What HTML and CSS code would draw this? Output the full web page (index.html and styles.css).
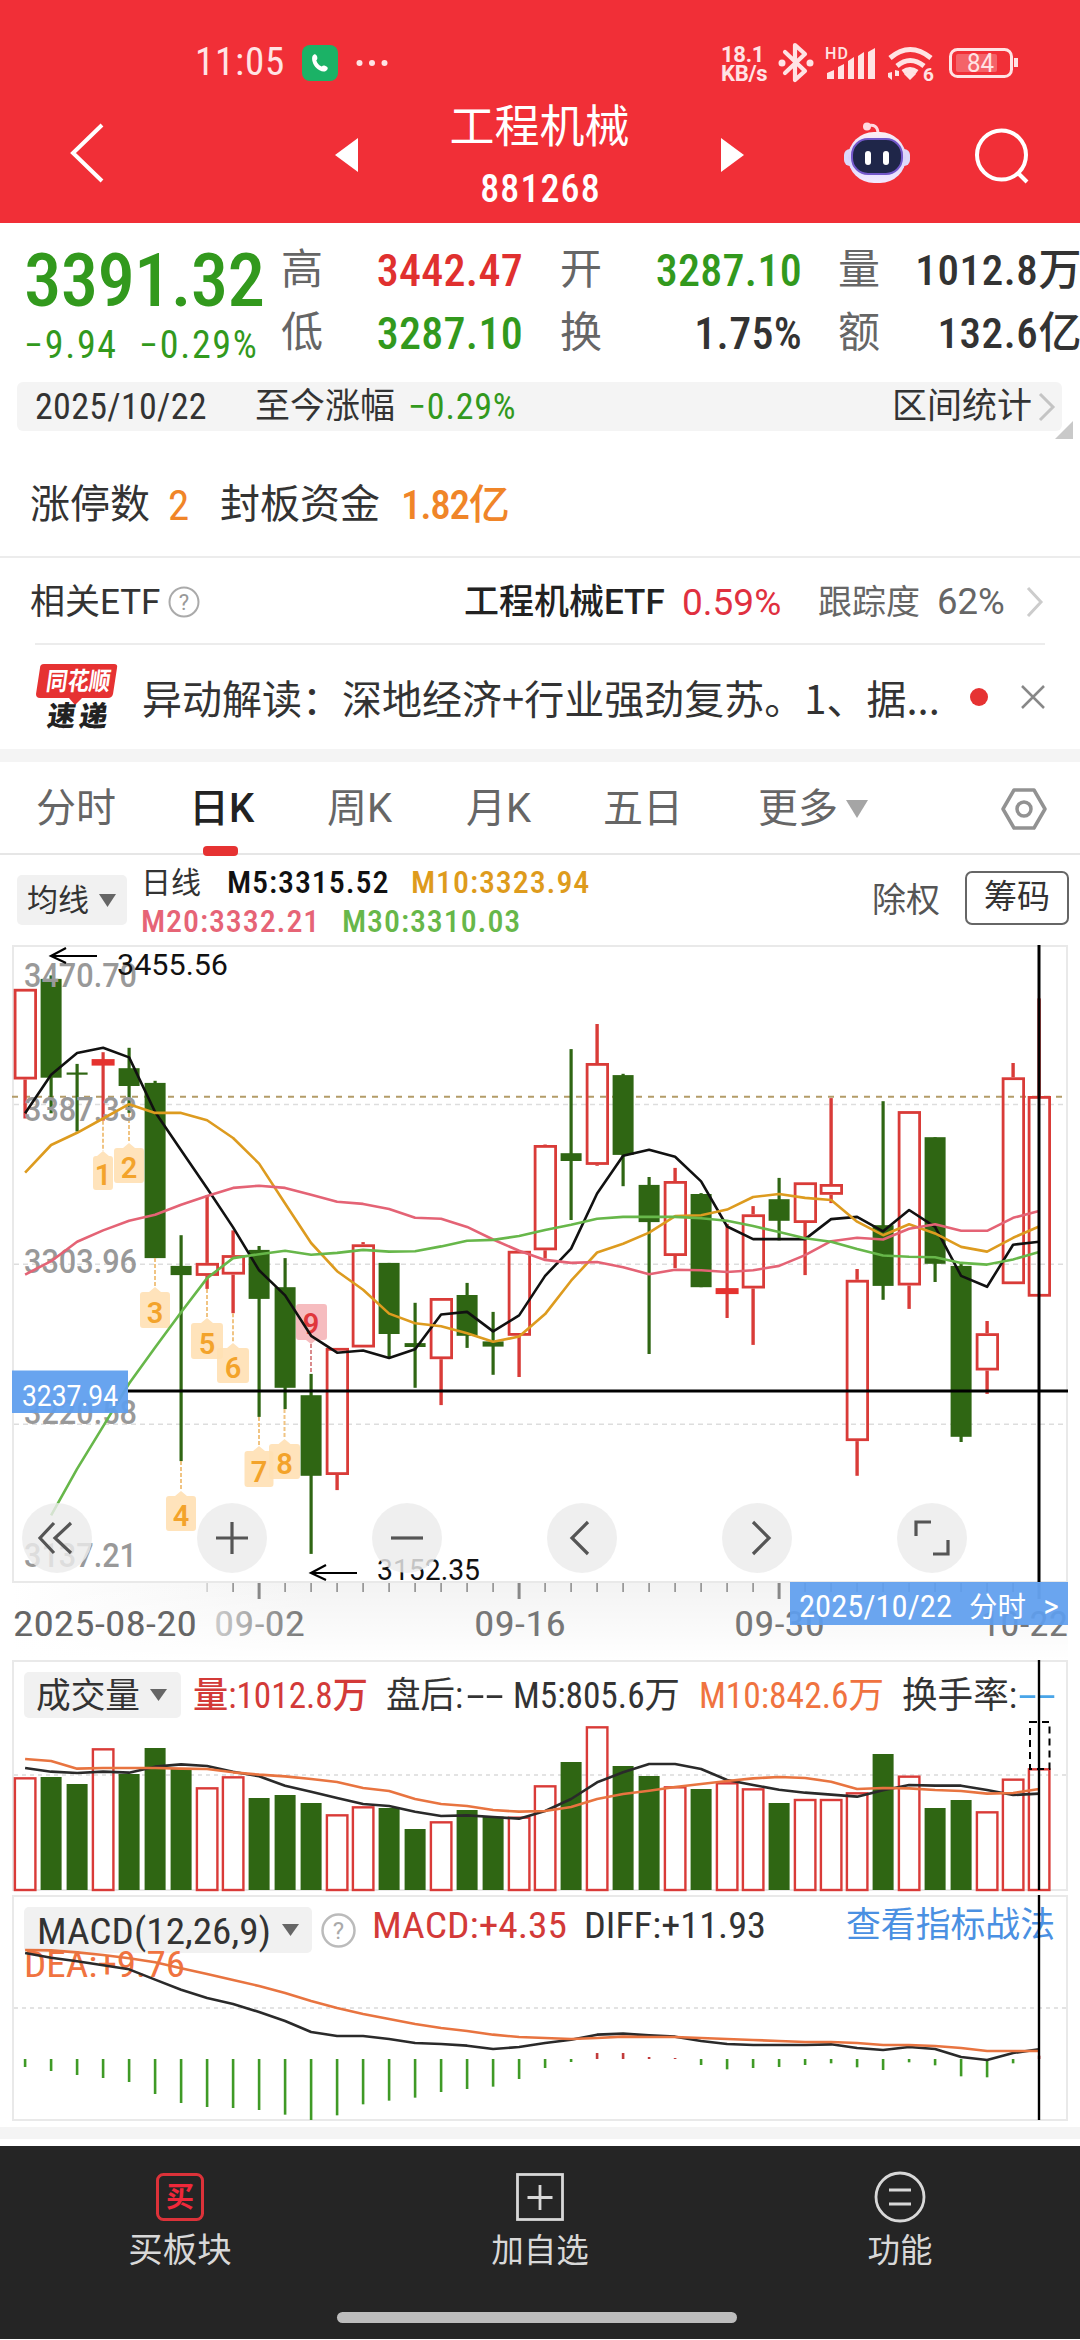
FILE: index.html
```html
<!DOCTYPE html>
<html lang="zh-CN">
<head>
<meta charset="utf-8">
<title>工程机械 881268</title>
<link rel="stylesheet" href="styles.css">
</head>
<body>
<header class="header">
  <div class="status">
    <span class="clock">11:05</span>
    <svg class="call" width="36" height="36" viewBox="0 0 36 36"><rect width="36" height="36" rx="8" fill="#1bb266"/><path d="M12 9.500c1-.8 2.600-.2 3.200 2.300.4 1.700.1 2.900-.9 3.500.7 3 2.600 5.200 5.500 6.200.8-.9 1.900-1.100 3.200-.7 2.400.8 3.300 2 2.500 3.400-1.400 2.600-4.500 3.100-8 1.100-4.600-2.600-7.200-6.900-7.400-11.500 0-2.200.6-3.500 1.900-4.300z" fill="#fff"/></svg>
    <svg class="dots" width="32" height="8" viewBox="0 0 32 8" fill="#ffe3e4"><circle cx="3.500" cy="4" r="3"/><circle cx="16" cy="4" r="3"/><circle cx="28.500" cy="4" r="3"/></svg>
    <span class="speed">18.1<br>KB/s</span>
    <svg class="sys" width="250" height="44" viewBox="774 40 250 44" fill="none" stroke="#ffe3e4">
      <path d="M785 51l20 19-10 9V44l10 9-20 19" stroke-width="4.200" stroke-linejoin="round" stroke-linecap="round"/>
      <g fill="#ffe3e4" stroke="none"><circle cx="782" cy="62" r="3.500"/><circle cx="810" cy="62" r="3.500"/>
      <path d="M827 78v-6l7-3v9zM838 78V66l6-3v15zM848 78V60l6-4v22zM858 78V55l6-4v27zM868 78V51l7-4v31z"/>
      <path d="M904 73l6-4 6 4-6 6zM888 72l4-1V79l-4-3zM895 69l4 1v5h-4z"/></g>
      <path d="M890 57q20-17 41 0M897 65q13-11 27 0M903 71q7-5 14 0" stroke-width="5"/>
      <rect x="950.500" y="48.500" width="61" height="27" rx="7" stroke-width="3"/>
      <rect x="956" y="53" width="41" height="18" rx="2" fill="#fff" fill-opacity=".25" stroke="none"/>
      <path d="M1016 57v9" stroke-width="4"/>
      <g fill="#ffe3e4" stroke="none"><text class="hd" x="825" y="58" textLength="23">HD</text><text class="six" x="923" y="80">6</text><text class="bat" x="967" y="71" textLength="27" lengthAdjust="spacingAndGlyphs">84</text></g>
    </svg>
  </div>
  <div class="titlebar">
    <svg class="back" width="36" height="64" viewBox="0 0 36 64"><path d="M33 4L4 32l29 28" fill="none" stroke="#fff" stroke-width="4"/></svg>
    <svg class="prev" width="23" height="34" viewBox="0 0 23 34"><path d="M23 0v34L0 17z" fill="#fff"/></svg>
    <h1 class="name">工程机械<small>881268</small></h1>
    <svg class="next" width="23" height="34" viewBox="0 0 23 34"><path d="M0 0v34l23-17z" fill="#fff"/></svg>
    <svg class="robot" width="68" height="62" viewBox="0 0 68 62">
      <defs><linearGradient id="shell" x1="0" y1="0" x2="0" y2="1"><stop offset="0" stop-color="#fdeef4"/><stop offset=".5" stop-color="#d9d3fb"/><stop offset="1" stop-color="#f2e9ff"/></linearGradient></defs>
      <path d="M24 4q11-3 11 8" fill="none" stroke="#ffd9e0" stroke-width="3"/><circle cx="24" cy="4.500" r="4" fill="#ffd9e0"/>
      <rect x="1" y="27" width="66" height="17" rx="6" fill="#dcd9fb"/><rect x="5" y="10" width="58" height="51" rx="26" fill="url(#shell)"/>
      <rect x="9" y="17" width="50" height="35" rx="16" fill="#1f2649" stroke="#7257c9" stroke-width="2"/>
      <rect x="22" y="29" width="6" height="14" rx="3" fill="#fff"/><rect x="40" y="29" width="6" height="14" rx="3" fill="#fff"/>
    </svg>
    <svg class="search" width="58" height="58" viewBox="0 0 58 58" fill="none" stroke="#fff" stroke-width="4"><circle cx="27.500" cy="28" r="24.500"/><path d="M44 46l9 9"/></svg>
  </div>
</header>

<section class="quote">
  <div class="last"><b>3391.32</b><span class="chg">−9.94</span><span>−0.29%</span></div>
  <dl class="stats">
    <dt>高</dt><dd class="up">3442.47</dd><dt>开</dt><dd class="down">3287.10</dd><dt>量</dt><dd>1012.8万</dd>
    <dt>低</dt><dd class="down">3287.10</dd><dt>换</dt><dd>1.75%</dd><dt>额</dt><dd>132.6亿</dd>
  </dl>
</section>
<div class="range">
  <span class="date">2025/10/22</span><span>至今涨幅</span><span class="pct">−0.29%</span><span class="stat">区间统计</span>
  <svg width="18" height="28" viewBox="0 0 18 28"><path d="M2 1l13 13L2 27" fill="none" stroke="#c4c4c4" stroke-width="3"/></svg>
  <i class="fold"></i>
</div>
<div class="limit"><span class="l1">涨停数</span><span class="l2">2</span><span class="l3">封板资金</span><b class="l4">1.82亿</b></div>
<div class="etf">
  <span class="e1">相关ETF</span>
  <svg class="e2" width="32" height="32" viewBox="0 0 32 32"><circle cx="16" cy="16" r="14.500" fill="none" stroke="#aaa" stroke-width="2"/><text x="16" y="24" class="q">?</text></svg>
  <b class="e3">工程机械ETF</b><span class="e4">0.59%</span><span class="e5">跟踪度</span><span class="e6">62%</span>
  <svg width="18" height="32" viewBox="0 0 18 32"><path d="M2 2l13 14L2 30" fill="none" stroke="#ccc" stroke-width="3"/></svg>
</div>
<div class="news">
  <svg class="brand" width="84" height="68" viewBox="0 0 84 68">
    <path d="M8 0h70q4 0 3 4l-4 26q-1 4-5 4H46l-7 7-6-7H4q-4 0-4-4L4 4q0-4 4-4z" fill="#e63232"/>
    <g transform="skewX(-8)"><text x="13" y="26" class="bt" textLength="64" lengthAdjust="spacingAndGlyphs">同花顺</text><text x="19" y="62" class="bb" textLength="60" lengthAdjust="spacing">速递</text></g>
  </svg>
  <span class="headline">异动解读：深地经济+行业强劲复苏。1、据...</span><i class="unread"></i>
  <svg width="24" height="24" viewBox="0 0 24 24"><path d="M1 1l22 22M23 1L1 23" stroke="#888" stroke-width="2.500"/></svg>
</div>
<nav class="tabs">
  <span>分时</span><span class="on">日K</span><span>周K</span><span>月K</span><span>五日</span><span>更多</span>
  <svg class="more" width="22" height="18" viewBox="0 0 22 18"><path d="M0 0h22L11 18z" fill="#a5a5a5"/></svg>
  <svg class="cfg" width="46" height="44" viewBox="0 0 46 44" fill="none" stroke="#929292" stroke-width="3.500"><path d="M13 3h20l11 19-11 19H13L2 22z" stroke-linejoin="round"/><circle cx="23" cy="22" r="7"/></svg>
</nav>
<section class="ma">
  <span class="chip">均线<svg width="17" height="13" viewBox="0 0 17 13"><path d="M0 0h17L8.500 13z" fill="#666"/></svg></span>
  <div class="legend"><div><span class="m0">日线</span><span class="m5">M5:3315.52</span><span class="m10">M10:3323.94</span></div><div><span class="m20">M20:3332.21</span><span class="m30">M30:3310.03</span></div></div>
  <span class="adj">除权</span><span class="btn">筹码</span>
</section>
<svg id="chart" class="chart" width="1080" height="1182" viewBox="0 946 1080 1182"></svg>
<footer class="foot">
  <div class="actions">
    <div class="red"><svg width="50" height="52" viewBox="0 0 50 52"><rect x="2.500" y="3.500" width="45" height="45" rx="6" fill="none" stroke="#dc3239" stroke-width="3"/><text class="buy" x="25" y="36">买</text></svg><span>买板块</span></div>
    <div><svg width="50" height="52" viewBox="0 0 50 52" fill="none" stroke="#d8d8d8" stroke-width="2.800"><rect x="2.500" y="3.500" width="45" height="45"/><path d="M25 14v25M12.500 26.500h25"/></svg><span class="s">加自选</span></div>
    <div><svg width="52" height="52" viewBox="0 0 52 52" fill="none" stroke="#d8d8d8" stroke-width="2.800"><circle cx="26" cy="26" r="24"/><path d="M15 19h22M15 33h22"/></svg><span class="s">功能</span></div>
  </div>
  <i class="home"></i>
</footer>
<script src="chart.js"></script>
</body>
</html>
```
FILE: styles.css
```css
* { box-sizing: border-box; }
body { margin: 0; width: 1080px; background: #fff; color: #333; font-family: "Roboto Condensed", "Noto Sans CJK SC", sans-serif; line-height: 1; }
b { font-weight: 500; }
svg { display: block; flex: none; overflow: visible; }
.header { height: 223px; background: #f12f37; color: #fff; }
.status { display: flex; align-items: center; height: 94px; padding: 31px 0 0 195px; color: #ffe3e4; }
.clock { width: 107px; font-size: 39px; letter-spacing: .8px; }
.dots { margin-left: 18px; }
.speed { width: 53px; margin-left: 333px; font: bold 22px/19px Roboto, sans-serif; letter-spacing: -.3px; padding-top: 3px; }
.hd { font: 500 16px Roboto, sans-serif; }
.six { font: bold 19px Roboto, sans-serif; }
.bat { font: 26px Roboto, sans-serif; }
.titlebar { display: flex; align-items: center; height: 129px; padding: 0 0 11px 69px; }
.prev { margin: 4px 0 0 230px; }
.name { margin: 0; width: 363px; text-align: center; font-size: 45px; font-weight: 400; padding-top: 7px; }
.name small { display: block; margin-top: 20px; padding-left: 2px; font-size: 38px; font-weight: 500; letter-spacing: 1.100px; }
.next { margin-top: 4px; }
.robot { margin-left: 99px; }
.search { margin: 6px 0 0 63px; }
.quote { display: flex; height: 159px; padding: 20px 0 0 24px; }
.last { width: 256px; color: #32991d; font-size: 38px; letter-spacing: 1.700px; white-space: nowrap; }
.last b { display: block; height: 83px; font-size: 75px; line-height: 75px; font-weight: 500; letter-spacing: -.8px; }
.last .chg { display: inline-block; width: 115px; }
.stats { display: grid; grid-template-columns: 43px 200px 79px 200px 78px 200px; grid-auto-rows: 63px; margin: 6px 0 0; font-size: 44px; }
.stats dt { color: #666; font-size: 42px; text-align: right; white-space: nowrap; }
.stats dd { margin: 0; font-weight: 500; text-align: right; letter-spacing: .3px; white-space: nowrap; }
.stats dd:nth-of-type(3n) { margin-right: -2px; font-size: 43px; letter-spacing: .6px; }
.up { color: #e0302f; }
.down { color: #32991d; }
.range { position: relative; display: flex; align-items: center; height: 49px; margin: 0 18px 0 17px; padding: 0 6px 0 18px; border-radius: 6px; background: #f4f4f4; font-size: 35px; }
.range .date { width: 220px; font-size: 36px; letter-spacing: .3px; }
.range .pct { margin-left: 13px; font-size: 36px; letter-spacing: .8px; color: #32991d; }
.range .stat { margin: 0 6px 0 auto; }
.fold { position: absolute; right: -11px; bottom: -8px; border: 9px solid; border-color: transparent #c9c9c9 #c9c9c9 transparent; }
.limit { display: flex; align-items: center; height: 127px; padding: 23px 30px 0; font-size: 40px; border-bottom: 2px solid #ececec; }
.l1 { width: 138px; }
.l2 { width: 52px; font-size: 43px; color: #f08528; }
.l3 { width: 181px; }
.l4 { color: #f08528; font-size: 41px; letter-spacing: -1.300px; }
.etf { display: flex; align-items: center; height: 87px; margin: 0 35px; padding: 3px 0 0; border-bottom: 2px solid #ececec; font: 35px/1 Roboto, "Noto Sans CJK SC", sans-serif; white-space: nowrap; }
.e1 { width: 138px; margin-left: -5px; }
.e2 { width: 32px; }
.e3 { width: 218px; margin-left: 264px; color: #222; }
.e4 { width: 136px; font-size: 37px; color: #e0303f; }
.e5 { width: 119px; font-size: 34px; color: #666; }
.e6 { width: 89px; font-size: 36.500px; color: #666; }
.q { font: 22px Roboto, sans-serif; text-anchor: middle; fill: #999; stroke: none; }
.news { display: flex; align-items: center; height: 104px; padding: 0 35px 0 36px; }
.brand { margin-top: 2px; }
.bt { font: bold 25px "Noto Sans CJK SC", sans-serif; fill: #fff; }
.bb { font: 900 28px "Noto Sans CJK SC", sans-serif; fill: #222; }
.headline { width: 849px; margin-left: 22px; font: 40px/1 "Noto Sans CJK SC", sans-serif; white-space: nowrap; }
.unread { width: 18px; height: 18px; margin: 0 33px 0 -19px; border-radius: 50%; background: #e63232; }
.tabs { display: grid; grid-template-columns: 153px 138px 139px 137px 155px 88px 155px 46px; align-items: center; height: 106px; padding: 2px 34px 0 36px; border-top: 13px solid #f4f4f4; border-bottom: 2px solid #e6e6e6; color: #666; font: 40px/1 Roboto, "Noto Sans CJK SC", sans-serif; }
.tabs .on { position: relative; color: #222; font-weight: 500; }
.on::after { content: ""; position: absolute; left: 14px; top: 57px; width: 35px; height: 10px; border-radius: 4px; background: #e63232; }
.ma { display: flex; align-items: center; height: 90px; padding-left: 17px; }
.chip { display: flex; align-items: center; justify-content: space-between; width: 110px; height: 50px; padding: 0 11px 0 10px; border-radius: 5px; background: #f1f1f1; font-size: 31px; }
.legend { width: 731px; margin-left: 14px; padding-top: 9px; font-size: 32px; font-weight: 500; }
.legend div { height: 39px; white-space: nowrap; }
.legend span { display: inline-block; }
.m0 { width: 86px; font-size: 30px; font-weight: 400; }
.m5 { width: 184px; color: #111; }
.m10 { color: #de9b1c; }
.m20 { width: 201px; color: #e66476; }
.m30 { color: #67b74a; }
.m5, .m10, .m20, .m30 { letter-spacing: .9px; }
.adj { width: 93px; color: #555; font-size: 34px; }
.btn { width: 104px; height: 54px; margin-top: -4px; border: 2px solid #666; border-radius: 7px; font-size: 33px; line-height: 48px; text-align: center; }
.chart { overflow: hidden; }
.chart text { font-family: "Roboto Condensed", "Noto Sans CJK SC", sans-serif; }
.chart .rb { font-family: Roboto, "Noto Sans CJK SC", sans-serif; }
.foot { height: 212px; padding-top: 19px; background: linear-gradient(#f4f4f4 12px, #fff 12px, #fff 19px, #252525 19px); color: #d8d8d8; }
.actions { display: grid; grid-template-columns: repeat(3, 360px); justify-items: center; height: 166px; padding-top: 25px; }
.actions div { display: flex; flex-direction: column; align-items: center; gap: 10px; font-size: 34.500px; }
.actions .s { font-size: 32.500px; padding-top: 2px; }
.buy { font: bold 28px "Noto Sans CJK SC", sans-serif; fill: #f0283a; text-anchor: middle; }
.home { display: block; width: 400px; height: 11px; margin-left: 337px; border-radius: 6px; background: #bdbdbd; }
```
FILE: chart.js
```js
const parts = [];
const add = s => parts.push(s);
const X = i => 25.1 + 26 * i;
// price pane values are stored in 1/2.306 px units from the pane origin
const P = v => +(930 + v / 2.306).toFixed(1);
const V = v => 1590 + v / 3;
const M = v => 1880 + v / 3;
const RED = '#d93b38', GREEN = '#2f6613', ORANGE = '#f07340';

const text = (s, x, y, size, fill, w, extra = '') =>
  add(`<text x="${x}" y="${y}" font-size="${size}" fill="${fill}" ${w ? `textLength="${w}" lengthAdjust="spacingAndGlyphs"` : ''} ${extra}>${s}</text>`);
const line = (x1, y1, x2, y2, c, w = 2, extra = '') =>
  add(`<path d="M${x1} ${y1}L${x2} ${y2}" stroke="${c}" stroke-width="${w}" fill="none" ${extra}/>`);
const rect = (x, y, w, h, fill, extra = '') =>
  add(`<rect x="${x}" y="${y}" width="${w}" height="${h}" fill="${fill}" ${extra}/>`);
const curve = (vals, f, c, start = 0, w = 2.6) =>
  add(`<polyline points="${vals.map((v, i) => X(i + start) + ',' + f(v)).join(' ')}" fill="none" stroke="${c}" stroke-width="${w}" stroke-linejoin="round"/>`);

add(`<defs><linearGradient id="ax" x1="0" x2="1"><stop offset="0" stop-color="#fff"/><stop offset=".28" stop-color="#f3f3f3"/><stop offset="1" stop-color="#f3f3f3"/></linearGradient>
<linearGradient id="fadeY" x1="0" x2="0" y1="0" y2="1"><stop offset="0" stop-color="#fff" stop-opacity="0"/><stop offset="1" stop-color="#fff"/></linearGradient>
<linearGradient id="fadeT" x1="0" x2="1"><stop offset="0" stop-color="#ccc"/><stop offset="1" stop-color="#777"/></linearGradient></defs>`);

// date axis
rect(12, 1583, 1056, 78, 'url(#ax)'); rect(12, 1583, 1056, 78, 'url(#fadeY)');

// pane frames and grid
[[947, 636], [1662, 229], [1897, 224]].forEach(([y, h]) => rect(13, y, 1054, h, 'none', 'stroke="#e9e9e9" stroke-width="2"'));
[405, 773, 1142].forEach(v => line(14, P(v), 1066, P(v), '#ddd', 1.500, 'stroke-dasharray="5 4"'));
line(12, P(387), 1066, P(387), '#b39c68', 2, 'stroke-dasharray="6 6"');
line(14, 1776, 1066, 1776, '#e3e3e3', 2, 'stroke-dasharray="4 4"');
line(14, 2009, 1066, 2009, '#e3e3e3', 2, 'stroke-dasharray="4 4"');

// candles: direction, high, body top, body bottom, low
const K = [['r',138,138,347,437],['g',107,115,343,425],['g',311,331,336,467],['R',284,300,315,442],['g',274,321,362,424],['g',350,355,759,759],['g',706,777,798,1227],['r',614,770,800,830],['r',695,752,797,886],['g',731,740,853,1125],['g',759,826,1058,1107],['g',1026,1075,1261,1441],['r',966,966,1259,1294],['r',722,727,965,965],['g',770,770,934,990],['g',862,955,964,1058],['r',851,851,992,1098],['g',816,844,938,966],['g',883,951,963,1028],['r',742,742,938,1033],['r',497,498,741,760],['g',277,517,535,671],['r',219,309,544,546],['g',334,337,521,593],['g',572,590,676,980],['r',551,581,754,782],['g',609,611,826,826],['R',680,828,842,897],['r',639,658,829,959],['g',574,623,673,718],['r',584,584,678,798],['r',390,588,613,632],['r',784,809,1181,1261],['g',397,683,823,855],['r',420,420,822,876],['g',480,480,772,814],['g',772,777,1171,1183],['r',904,932,1018,1072],['r',309,342,819,819],['r',160,385,848,848]];
K.forEach(([d, hi, t, b, lo], i) => {
  const x = X(i), c = d === 'g' ? GREEN : RED;
  if (d === 'r') {
    line(x, P(hi), x, P(t), c, 3.4); line(x, P(b), x, P(lo), c, 3.4);
    rect(x - 10, P(t) + 1.4, 20.500, P(b) - P(t) - 2.800, 'none', `stroke="${c}" stroke-width="2.800"`);
  } else {
    line(x, P(hi), x, P(lo), c, 3.2);
    rect(x - (d === 'R' ? 11.500 : 10.500), P(t), d === 'R' ? 23 : 21, P(b) - P(t), d === 'R' ? '#e5322f' : c);
  }
});

// nine-count tags: label, centre x, top, bottom, width, low of the candle
[['1',103,1152,1191,20,442],['2',129,1144,1184,30,424],['3',155,1288,1329,30,759],['4',181,1492,1532,30,1227],['5',207,1319,1360,32,830],['6',233,1344,1384,32,886],['7',259,1447,1488,29,1125],['8',284.500,1440,1480,31,1107]].forEach(([n, x, t, b, w, lo]) => {
  line(x, P(lo), x, t, '#f0c483', 2, 'stroke-dasharray="4 2"');
  add(`<path d="M${x} ${t}l6 5h${w / 2 - 9}q3 0 3 3V${b - 3}q0 3-3 3H${x - w / 2 + 3}q-3 0-3-3V${t + 8}q0-3 3-3H${x - 6}z" fill="#ffe0b4" fill-opacity=".9"/>`);
  text(n, x, b - 5, 29, '#f3a32b', 0, 'class="rb" font-weight="600" text-anchor="middle"');
});
line(311, 1345, 311, P(1026), '#d98a8c', 2, 'stroke-dasharray="4 2"');
add('<path d="M299 1305h25q3 0 3 3v30q0 3-3 3h-8l-5 4-5-4h-7q-3 0-3-3v-30q0-3 3-3z" fill="#f5b5b8" fill-opacity=".9"/>');
text('9', 311, 1335, 29, '#e0383b', 0, 'class="rb" font-weight="600" text-anchor="middle"');

// price scale
[['3470.70', 988], ['3387.33', 1122], ['3303.96', 1273.500], ['3220.58', 1425], ['3137.21', 1568]].forEach(([s, y]) => text(s, 24, y, 33, '#999', 113, 'class="rb" font-weight="500"'));

curve([425,336,286,274,296,422,510,598,688,787,845,938,977,972,989,969,889,883,928,891,800,737,610,523,509,525,582,686,715,715,715,669,664,697,648,687,800,825,728,721], P, '#111');
curve([562,498,470,437,404,424,424,441,482,541,633,724,789,832,887,909,916,932,952,940,888,811,746,726,700,662,660,647,618,611,620,625,675,706,681,702,733,744,712,686], P, '#dd9b1f');
curve([797,766,721,695,673,659,636,616,597,592,597,613,629,634,646,666,668,687,716,742,763,770,768,780,796,786,787,791,787,777,752,720,712,716,691,681,696,696,666,650], P, '#e46375');
curve([1352,1245,1147,1048,965,884,805,759,750,742,751,747,740,744,743,732,719,717,708,694,682,668,664,664,664,667,673,685,699,713,721,738,753,756,757,770,774,762,745], P, '#67b74a', 1);

const arrow = (x, y) => add(`<path d="M${x + 46} ${y}H${x}M${x + 15} ${y - 8}L${x} ${y}l15 7" fill="none" stroke="#000" stroke-width="2.200"/>`);
arrow(51, 957); text('3455.56', 117, 975.500, 29, '#111', 111, 'class="rb"');
arrow(311, 1574); text('3152.35', 377, 1581, 29, '#111', 103, 'class="rb"');

// crosshair
line(128, 1392, 1068, 1392, '#000', 2.800);
line(1039, 946, 1039, 1583, '#000', 3);
rect(12, 1371.500, 116, 42.500, '#5f9eee', 'fill-opacity=".94"');
text('3237.94', 22, 1406.500, 30, '#fff', 96, 'class="rb"');

// floating buttons
const G = {
  57: 'M54 1524l-14 15 14 15M71 1524l-16 15 16 15', 232: 'M216 1539h32M232 1523v32', 407: 'M391 1539h32',
  582: 'M588 1523l-16 16 16 16', 757: 'M753 1523l16 16-16 16', 932: 'M916 1537v-14h15M948 1541v14h-15'
};
for (const x in G) add(`<circle cx="${x}" cy="1539" r="35" fill="#ebebeb" fill-opacity=".82"/><path d="${G[x]}" fill="none" stroke="#555" stroke-width="3.200"/>`);

for (let i = 7; i < 40; i++) {
  const major = i % 10 === 9;
  line(X(i), 1584, X(i), major ? 1600 : 1593, i === 7 ? '#ccc' : '#888', major ? 3 : 1.500);
}
const D = 'font-weight="450"';
text('2025-08-20', 13, 1637, 35, '#666', 184, D);
text('09-02', 214, 1637, 35, 'url(#fadeT)', 91);
text('09-16', 474, 1637, 35, '#777', 92);
text('09-30', 734, 1637, 35, '#777', 91);
text('10-22', 981, 1637, 35, '#777', 87);
rect(790, 1583, 278, 43, '#5f9eee', 'fill-opacity=".93"');
text('2025/10/22', 799, 1618, 31, '#fff', 153); text('分时', 969, 1618, 28, '#fff', 57); text('&gt;', 1043, 1618, 32, '#fff', 16);

// volume pane
[565,564,585,478,555,477,540,595,562,627,618,642,676,652,657,720,697,663,683,683,589,519,412,531,561,592,600,580,598,642,630,630,610,495,560,657,633,667,569,538].forEach((v, i) => {
  const x = X(i), y = V(v);
  const up = K[i][0] !== 'g';
  if (up) rect(x - 10.200, y + 1, 20.500, 1890 - y, 'none', `stroke="${RED}" stroke-width="2.400"`);
  else rect(x - 10.500, y, 21, 1891 - y, GREEN);
});
curve([537,548,552,548,551,533,526,531,548,562,590,608,627,645,651,668,681,679,684,689,666,630,580,550,525,525,540,573,588,602,611,617,623,604,588,590,590,603,618,614], V, '#2a2a2a');
curve([510,516,539,537,537,537,539,540,550,557,562,570,579,597,606,630,645,651,663,668,666,654,630,615,605,594,585,576,568,564,567,578,600,597,598,603,606,614,612,600], V, '#e87440');
rect(1030, 1723, 19.500, 47, 'none', 'stroke="#000" stroke-width="2" stroke-dasharray="7 5"');
rect(24, 1673, 157, 46, '#f1f1f1', 'rx="5"');
text('成交量', 36, 1709, 35, '#333', 104); add('<path d="M150 1690h17l-8.500 12z" fill="#666"/>');
text('量:1012.8万', 193, 1709, 36, '#d33a38', 175, D);
text('盘后:', 386, 1709, 36, '#333', 77); text('--', 466, 1709, 36, '#333', 38);
text('M5:805.6万', 513, 1709, 36, '#333', 167);
text('M10:842.6万', 699, 1709, 36, ORANGE, 185);
text('换手率:', 902, 1709, 36, '#333', 115); text('--', 1018, 1709, 36, '#49a5e8', 38);

// MACD pane
rect(24, 1908, 288, 46, '#f1f1f1', 'rx="5"');
text('MACD(12,26,9)', 37, 1945, 36, '#333', 234); add('<path d="M282 1925h17l-8.500 12z" fill="#666"/>');
add('<circle cx="338.500" cy="1931.500" r="16" fill="none" stroke="#bbb" stroke-width="2.500"/>');
text('?', 338.500, 1940, 24, '#aaa', 0, 'class="rb" text-anchor="middle"');
text('MACD:+4.35', 372, 1939, 36, '#d33a38', 195, D);
text('DIFF:+11.93', 584, 1939, 36, '#333', 182);
text('查看指标战法', 846, 1938, 35, '#4a90e2', 209);
text('DEA:+9.76', 24, 1978, 36, ORANGE, 161, D);
[564,576,588,597,609,645,672,684,687,693,707,723,709,676,665,656,639,630,623,600,567,549,522,522,534,537,558,571,567,564,558,553,565,573,550,559,592,595,553,530].forEach((v, i) => line(X(i), M(540), X(i), M(v), v < 540 ? '#c23b3b' : '#3f9a26', 2.6));
curve([222,236,247,259,271,302,332,357,375,399,426,459,471,471,480,492,495,500,510,504,492,482,467,464,469,473,486,495,498,498,498,496,507,513,504,510,534,543,522,511], M, '#2a2a2a');
curve([213,214,220,228,238,250,268,285,303,321,342,366,387,405,420,435,447,456,467,474,477,480,477,473,474,474,477,480,483,486,489,489,492,498,498,501,507,516,516,516], M, '#e87440');
line(1039, 1661, 1039, 1891, '#000', 2.400);
line(1039, 1896, 1039, 2121, '#000', 2.400);

document.getElementById('chart').innerHTML = parts.join('');
```
